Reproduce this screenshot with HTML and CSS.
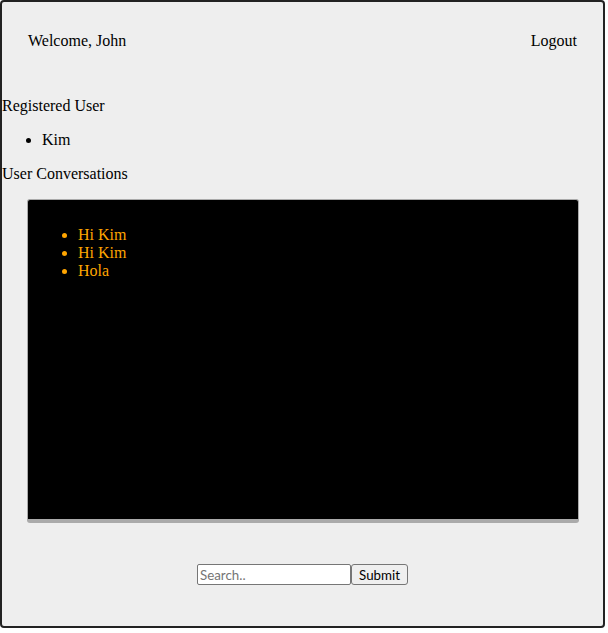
FILE: index.html
```html
<!DOCTYPE html>
<html>
<head>
<meta charset="utf-8">
<title>Chat</title>
<link rel="stylesheet" href="styles.css">
</head>
<body>
<div class="app">
  <header class="topbar">
    <span class="welcome">Welcome, John</span>
    <span class="logout">Logout</span>
  </header>
  <p class="section-title">Registered User</p>
  <ul class="users">
    <li>Kim</li>
  </ul>
  <p class="section-title">User Conversations</p>
  <div class="conversation">
    <ul class="messages">
      <li>Hi Kim</li>
      <li>Hi Kim</li>
      <li>Hola</li>
    </ul>
  </div>
  <form class="search">
    <input class="search-input" type="text" placeholder="Search..">
    <button class="search-button" type="button">Submit</button>
  </form>
</div>
</body>
</html>
```

FILE: styles.css
```css
html, body {
  margin: 0;
  padding: 0;
  background: #ffffff;
}

body {
  font-family: "Liberation Serif", "Times New Roman", serif;
  font-size: 16px;
  line-height: 18px;
  color: #000;
}

.app {
  margin: 0 3px 5px 0;
  border: 2px solid #222;
  border-radius: 4px;
  background: #eeeeee;
  height: 628px;
  box-sizing: border-box;
}

.topbar {
  display: flex;
  justify-content: space-between;
  align-items: center;
  padding: 30px 26px 31px 26px;
}

.section-title {
  margin: 16px 0;
}

.users {
  margin: 16px 0;
  padding-left: 40px;
}

.conversation {
  margin: 16px 24px 0 25px;
  height: 324px;
  box-sizing: border-box;
  background: #000;
  border: 1px solid #aaaaaa;
  border-bottom-width: 4px;
  border-radius: 3px;
  padding: 10px 10px 9px;
}

.messages {
  margin: 16px 0;
  padding-left: 40px;
  color: #ffa500;
}

.search {
  display: flex;
  justify-content: center;
  padding-top: 41px;
  margin: 0;
}

.search-input {
  width: 154px;
  height: 21px;
  box-sizing: border-box;
  border: 1px solid #767676;
  border-radius: 2px;
  padding: 1px 2px;
  margin: 0;
  font-family: "Lato", "Liberation Sans", sans-serif;
  font-size: 13.333px;
  background: #fff;
  color: #000;
}

.search-input::placeholder {
  color: #757575;
}

.search-button {
  width: 57px;
  height: 21px;
  box-sizing: border-box;
  border: 1px solid #767676;
  border-radius: 3px;
  background: #efefef;
  padding: 1px 6px;
  margin: 0;
  font-family: "Lato", "Liberation Sans", sans-serif;
  font-size: 13.333px;
  color: #000;
}
```
